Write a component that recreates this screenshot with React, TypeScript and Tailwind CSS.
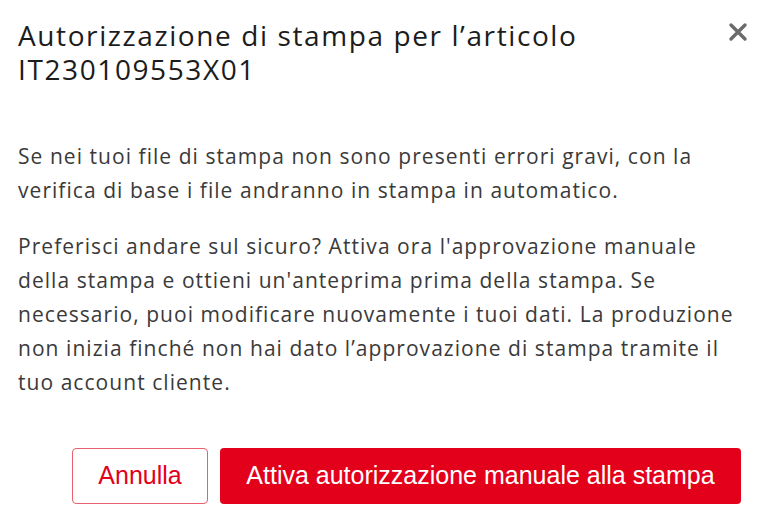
import React from 'react';

export default function App() {
  return (
    <div className="w-[768px] h-[518px] bg-white overflow-hidden relative" style={{ fontFamily: '"Open Sans", sans-serif' }}>
      <div className="flex items-start justify-between pl-[18px] pr-[20px] pt-[18px]">
        <h2 className="text-[28px] leading-[34px] font-medium text-[#1c1c1c] tracking-[1.6px]">
          Autorizzazione di stampa per l’articolo
          <br />
          IT230109553X01
        </h2>
        <button className="mt-[4px] text-[#6b6b6b]" aria-label="Chiudi">
          <svg width="20" height="20" viewBox="0 0 20 20">
            <path d="M3 3 L17 17 M17 3 L3 17" stroke="currentColor" strokeWidth="3.4" strokeLinecap="round" />
          </svg>
        </button>
      </div>

      <div className="px-[18px] pt-[53px] text-[21px] leading-[34px] text-[#3a3a3a] tracking-[1.05px]">
        <p>
          Se nei tuoi file di stampa non sono presenti errori gravi, con la
          <br />
          verifica di base i file andranno in stampa in automatico.
        </p>
        <p className="mt-[22px]">
          Preferisci andare sul sicuro? Attiva ora l'approvazione manuale
          <br />
          della stampa e ottieni un'anteprima prima della stampa. Se
          <br />
          necessario, puoi modificare nuovamente i tuoi dati. La produzione
          <br />
          non inizia finché non hai dato l’approvazione di stampa tramite il
          <br />
          tuo account cliente.
        </p>
      </div>

      <div className="flex justify-end gap-[12px] pr-[27px] pt-[49px]" style={{ fontFamily: '"Liberation Sans", Arial, sans-serif' }}>
        <button className="h-[56px] w-[136px] rounded-[4px] border border-[#e8606c] text-[#e2001a] text-[25px]">
          Annulla
        </button>
        <button className="h-[56px] w-[521px] rounded-[4px] bg-[#e3001b] text-white text-[25px]">
          Attiva autorizzazione manuale alla stampa
        </button>
      </div>
    </div>
  );
}
